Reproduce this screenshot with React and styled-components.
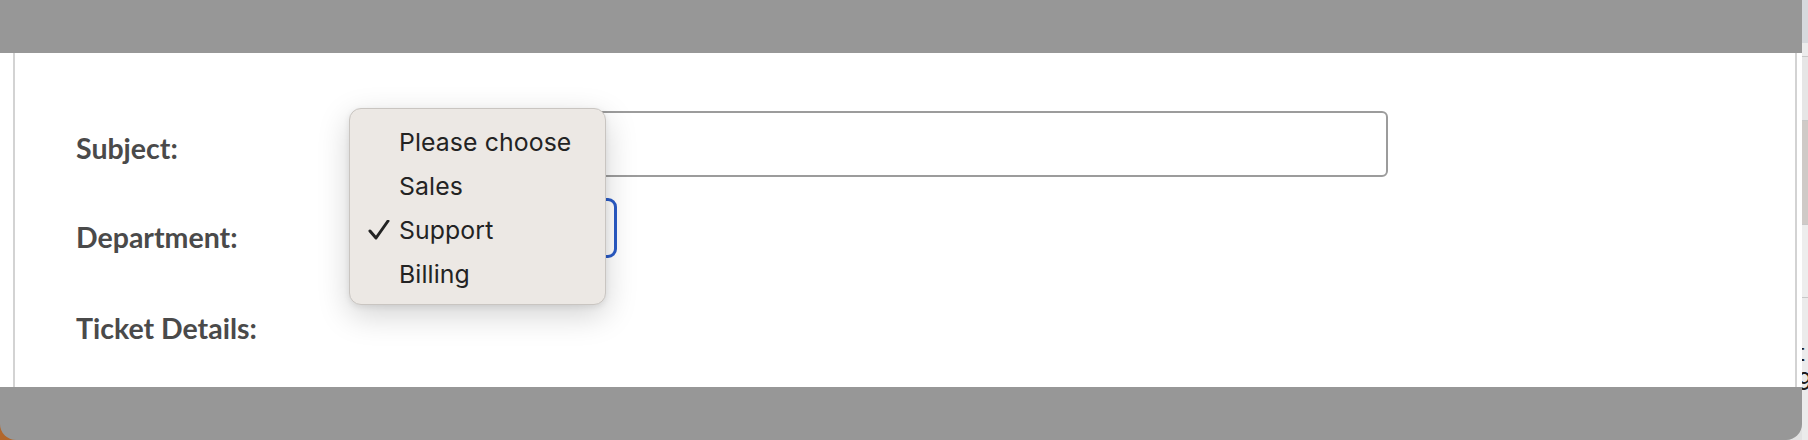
import React from "react";
import styled, { createGlobalStyle } from "styled-components";

const GlobalStyle = createGlobalStyle`
  html, body {
    margin: 0;
    padding: 0;
  }
  body {
    width: 1808px;
    height: 440px;
    overflow: hidden;
    background: #e4e4e4;
    font-family: Lato, "Liberation Sans", sans-serif;
  }
`;

const Screen = styled.div`
  display: flex;
  width: 1808px;
  height: 440px;
  background: linear-gradient(to right, #b3672b 0 24px, #e2e2e2 24px);
`;

const Modal = styled.div`
  width: 1802px;
  flex-shrink: 0;
  display: flex;
  flex-direction: column;
`;

const Overlay = styled.div`
  background: #979797;
  height: ${(p) => p.h}px;
  flex-shrink: 0;
  border-radius: ${(p) => (p.bottom ? "0 0 16px 16px" : "0")};
`;

const Content = styled.div`
  position: relative;
  height: 334px;
  flex-shrink: 0;
  background: #ffffff;
  padding: 0 5px 0 13px;
  box-sizing: border-box;
  display: flex;
`;

const Scroller = styled.div`
  flex: 1;
  border-left: 2px solid #d3d3d3;
  border-right: 2px solid #d3d3d3;
  padding: 58px 0 0 61px;
  overflow: hidden;
`;

const Form = styled.div`
  display: grid;
  grid-template-columns: 276px 1036px;
  row-gap: 21px;
`;

const Label = styled.div`
  padding-top: ${(p) => p.top}px;
  font-size: 28.5px;
  line-height: 1.2;
  font-weight: 700;
  color: #4a4a4a;
`;

const TextInput = styled.div`
  height: 66px;
  box-sizing: border-box;
  border: 2px solid #9c9c9c;
  border-radius: 6px;
  background: #fff;
`;

const Select = styled.div`
  width: 265px;
  height: 60px;
  box-sizing: border-box;
  border: 3px solid #2a5bc6;
  border-radius: 9px;
  background: #fff;
`;

const Menu = styled.div`
  position: absolute;
  left: 349px;
  top: 55px;
  width: 257px;
  height: 197px;
  box-sizing: border-box;
  padding: 11px 0 9px 0;
  background: #ece8e4;
  border: 1px solid #c9c5c1;
  border-radius: 12px;
  box-shadow: 0 10px 32px rgba(0, 0, 0, 0.18), 0 2px 6px rgba(0, 0, 0, 0.08);
`;

const MenuItem = styled.div`
  position: relative;
  height: 44px;
  line-height: 44px;
  padding-left: 49px;
  font-family: Inter, "Noto Sans", sans-serif;
  font-size: 24.8px;
  color: #232323;
  letter-spacing: 0.1px;
`;

const Check = styled.svg`
  position: absolute;
  left: 18px;
  top: 12px;
`;

const Side = styled.div`
  width: 6px;
  flex-shrink: 0;
  display: flex;
  flex-direction: column;
  overflow: hidden;
  background: #ebebeb;
`;

const SideBlock = styled.div`
  height: ${(p) => p.h}px;
  background: ${(p) => p.bg};
  border-bottom: ${(p) => (p.line ? "1px solid #c8c8c8" : "none")};
  flex-shrink: 0;
`;

const SideText = styled.div`
  font-family: Inter, "Noto Sans", sans-serif;
  font-size: 24px;
  line-height: 29px;
  color: #1d1d1d;
  margin-left: -5px;
  white-space: nowrap;
`;

const options = ["Please choose", "Sales", "Support", "Billing"];

function App() {
  const selected = "Support";
  return (
    <>
      <GlobalStyle />
      <Screen>
        <Modal>
          <Overlay h={53} />
          <Content>
            <Scroller>
              <Form>
                <Label top={20}>Subject:</Label>
                <TextInput />
                <Label top={22}>Department:</Label>
                <Select />
                <Label top={32}>Ticket Details:</Label>
                <div />
              </Form>
            </Scroller>
            <Menu>
              {options.map((o) => (
                <MenuItem key={o}>
                  {o === selected && (
                    <Check width="22" height="20" viewBox="0 0 22 20">
                      <path d="M2 11 L8 18 L20 1" fill="none" stroke="#232323" strokeWidth="3" strokeLinecap="round" strokeLinejoin="round" />
                    </Check>
                  )}
                  {o}
                </MenuItem>
              ))}
            </Menu>
          </Content>
          <Overlay h={53} bottom />
        </Modal>
        <Side>
          <SideBlock h={43} bg="#d6d9dd" />
          <SideBlock h={13} bg="#ececec" line />
          <SideBlock h={63} bg="#e6e6e6" line />
          <SideBlock h={103} bg="#cfcac7" line />
          <SideBlock h={72} bg="#ededed" line />
          <SideBlock h={40} bg="#ebebeb" />
          <SideText>t<br />9</SideText>
        </Side>
      </Screen>
    </>
  );
}

export default App;
